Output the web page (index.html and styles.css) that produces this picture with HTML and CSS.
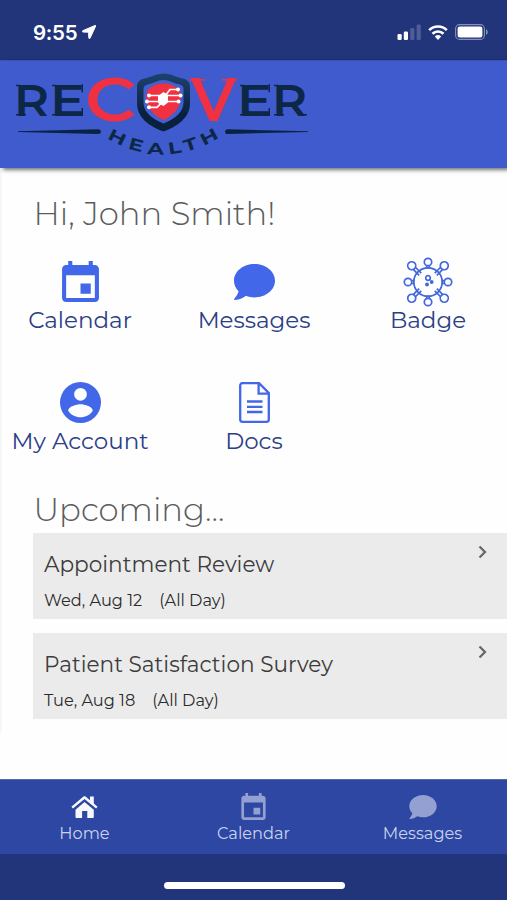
FILE: index.html
```
<!DOCTYPE html>
<html lang="en">
<head>
    <meta charset="UTF-8">
    <meta name="viewport" content="width=device-width, initial-scale=1.0">
    <title>Recover Health</title>
    <link rel="stylesheet" href="styles.css">
</head>
<body>
    <!-- Shared icons -->
    <svg class="sprite" width="0" height="0">
        <symbol id="icon-calendar" viewBox="3 1 18 20">
            <path d="M17 12h-5v5h5v-5zM16 1v2H8V1H6v2H5c-1.11 0-1.99.9-1.99 2L3 19c0 1.1.89 2 2 2h14c1.1 0 2-.9 2-2V5c0-1.1-.9-2-2-2h-1V1h-2zm3 18H5V8h14v11z"/>
        </symbol>
        <symbol id="icon-message" viewBox="0 32 512 448">
            <path d="M256 32C114.6 32 0 125.1 0 240c0 49.6 21.4 95 57 130.7C44.5 421.1 2.7 466 2.2 466.5c-2.2 2.3-2.8 5.7-1.5 8.7S4.8 480 8 480c66.3 0 116-31.8 140.6-51.4 32.7 12.3 69 19.4 107.4 19.4 141.4 0 256-93.1 256-208S397.4 32 256 32z"/>
        </symbol>
    </svg>

    <div class="status-bar">
        <div class="clock">
            <span class="time">9:55</span>
            <svg class="location" width="14" height="14" viewBox="0 0 14 14"><path d="M13.2.4.8 5.7c-.8.4-.6 1.3.2 1.3l5.6.2.2 5.7c.1.9 1 1 1.3.2L13.7 1c.2-.4-.1-.8-.5-.6z" stroke="#fff"/></svg>
        </div>
        <div class="status-icons">
            <svg width="24" height="16" viewBox="0 0 24 16">
                <rect x="0.5" y="10" width="4.2" height="6" rx="1.2"/>
                <rect x="6.8" y="7.5" width="4.2" height="8.5" rx="1.2"/>
                <rect x="13.2" y="4" width="4.2" height="12" rx="1.2" opacity=".2"/>
                <rect x="19.6" y="0.5" width="4.2" height="15.5" rx="1.2" opacity=".2"/>
            </svg>
            <svg class="wifi" width="20" height="15" viewBox="0 0 20 15">
                <path d="M1.2 5.1a12.6 12.6 0 0 1 17.6 0M4.5 8.7a8 8 0 0 1 11 0" fill="none" stroke="#fff" stroke-width="2.7"/>
                <path d="M10 15l3.2-3.5a4.7 4.7 0 0 0-6.4 0z"/>
            </svg>
            <svg class="battery" width="33" height="16" viewBox="0 0 33 16">
                <rect x=".6" y=".6" width="28.8" height="14.8" rx="4" fill="none" stroke="#fff" stroke-width="1.1" opacity=".45"/>
                <rect x="2.6" y="2.6" width="24.8" height="10.8" rx="2.2"/>
                <path d="M31 5.2c2.3.7 2.3 4.9 0 5.6z" opacity=".45"/>
            </svg>
        </div>
    </div>

    <div class="header">
        <svg class="logo" width="320" height="108" viewBox="0 60 320 108">
            <defs>
                <linearGradient id="navy" x1="0" y1="0" x2="0" y2="1">
                    <stop offset="0" stop-color="#1d4270"/>
                    <stop offset=".7" stop-color="#09213f"/>
                </linearGradient>
                <path id="health-arc" d="M107 138 Q163 172 222 136"/>
            </defs>
            <text class="logo-dark" x="14" y="115.5" textLength="35" lengthAdjust="spacingAndGlyphs">R</text>
            <text class="logo-dark" x="50" y="115.5" textLength="35" lengthAdjust="spacingAndGlyphs">E</text>
            <text class="logo-red" x="85" y="121" textLength="51" lengthAdjust="spacingAndGlyphs">C</text>
            <text class="logo-red" x="191" y="121" textLength="45" lengthAdjust="spacingAndGlyphs">V</text>
            <text class="logo-dark" x="237" y="115.5" textLength="35" lengthAdjust="spacingAndGlyphs">E</text>
            <text class="logo-dark" x="272" y="115.5" textLength="35" lengthAdjust="spacingAndGlyphs">R</text>
            <!-- Small serifs -->
            <path d="M16 84.7h4v1.6h-4zM16 114h10v1.600H16zM52 84.700h4v1.600h-4zM52 114h4v1.600h-4zM81.500 84.200h1.500v8h-1.500zM81.500 108h1.500v8h-1.500zM240 84.700h4v1.600h-4zM240 114h4v1.600h-4zM268.500 84.200h1.500v8h-1.500zM268.500 108h1.500v8h-1.500zM274 84.700h4v1.600h-4zM274 114h10v1.600h-10zM299 114h8v1.600h-8z" fill="#0d2747"/>
            <path d="M190 79h15v1.800h-15zM222 79h15v1.800h-15z" fill="#ef3142"/>

            <!-- Shield -->
            <path d="M163.500 73.500c8 0 13 4 19 5 5 1 7.500 4 7.500 8v17c0 14-12.500 23-26.500 28-14-5-26.500-14-26.500-28v-17c0-4 2.500-7 7.500-8 6-1 11-5 19-5z" fill="url(#navy)"/>
            <path d="M163.500 80c6 0 11 3.500 16 4.500 3 .7 4 2 4 5v13c0 10-9 16.500-20 21-11-4.500-20-11-20-21v-13c0-3 1-4.300 4-5 5-1 10-4.500 16-4.500z" fill="#4460cf"/>
            <path d="M163.500 83.500c6 0 10 1.500 14 5 4 3 4 13 1 18-3 6-9 11-15 13.500-6-2.500-12-7.500-15-13.500-3-5-3-15 1-18 4-3.500 8-5 14-5z" fill="#ef3142"/>
            <g fill="none" stroke="#fff" stroke-width="1.7">
                <path d="M149 95.500h11M147 101.500h14M149 107.300h8l4-4M165 96l5-6.500h8M166 95.500h14M164 101.500h14"/>
            </g>
            <path d="M163.500 92l4.500 3v7.500l-4.500 3.500-5.500-3v-7z" fill="#fff"/>
            <g fill="#fff">
                <circle cx="149" cy="95.500" r="2"/><circle cx="147" cy="101.500" r="2"/><circle cx="149" cy="107.300" r="2"/>
                <circle cx="178" cy="89.500" r="2"/><circle cx="180.500" cy="95.500" r="2"/><circle cx="178.500" cy="101.500" r="2"/>
            </g>

            <path d="M18 131.300l80-2.100c4 0 4 5 0 4.800L18 131.900z" fill="#0b2342"/>
            <path d="M308 131.300l-80-2.100c-4 0-4 5 0 4.800l80-2.100z" fill="#0b2342"/>
            <text class="logo-health"><textPath href="#health-arc" textLength="124" lengthAdjust="spacingAndGlyphs">HEALTH</textPath></text>
        </svg>
    </div>

    <div class="content">
        <h1 class="greeting">Hi, John Smith!</h1>

        <div class="menu">
            <a class="menu-item">
                <svg class="menu-icon" width="37" height="41"><use href="#icon-calendar"/></svg>
                <span>Calendar</span>
            </a>
            <a class="menu-item">
                <svg class="menu-icon" width="41" height="36"><use href="#icon-message"/></svg>
                <span>Messages</span>
            </a>
            <a class="menu-item">
                <svg class="menu-icon badge-icon" width="50" height="50" viewBox="-25 -25 50 50">
                    <circle r="14.2"/>
                    <circle cy="-20" r="3.7"/><path d="M-1.3-16.500v3M1.300-16.500v3"/>
                    <circle cy="20" r="3.7"/><path d="M-1.3 16.500v-3M1.300 16.500v-3"/>
                    <circle cx="-20" r="3.7"/><path d="M-16.500-1.300h3M-16.500 1.300h3"/>
                    <circle cx="20" r="3.7"/><path d="M16.500-1.300h-3M16.500 1.300h-3"/>
                    <g transform="rotate(45)">
                        <circle cy="-23" r="4"/><path d="M-1.500-19v8M1.500-19v8"/>
                        <circle cy="23" r="4"/><path d="M-1.500 19v-8M1.500 19v-8"/>
                        <circle cx="-23" r="4"/><path d="M-19-1.500h8M-19 1.500h8"/>
                        <circle cx="23" r="4"/><path d="M19-1.500h-8M19 1.500h-8"/>
                    </g>
                    <circle cx="0" cy="-4" r="2.3"/>
                    <circle class="dot" cx="3.7" cy="0" r="1.9"/>
                    <circle class="dot" cx="-1" cy="2.5" r="1.9"/>
                </svg>
                <span>Badge</span>
            </a>
            <a class="menu-item">
                <svg class="menu-icon" width="41" height="41" viewBox="2 2 20 20"><path fill-rule="evenodd" d="M12 2a10 10 0 1 0 0 20 10 10 0 0 0 0-20zm0 2.9a3.1 3.1 0 1 1 0 6.2 3.1 3.1 0 0 1 0-6.2zm0 14.300c-2.500 0-4.700-1.200-6-3.200 0-2 4-3.100 6-3.100s6 1.100 6 3.100c-1.300 2-3.500 3.200-6 3.200z"/></svg>
                <span>My Account</span>
            </a>
            <a class="menu-item">
                <svg class="menu-icon docs-icon" width="31" height="41" viewBox="0 0 31 41">
                    <path d="M3.5 1.1H20L29.800 11v26.500c0 1.300-1 2.300-2.300 2.300h-24c-1.300 0-2.300-1-2.300-2.300v-34c0-1.300 1-2.400 2.300-2.400zM19.600 1.500V11.600H29.500"/>
                    <path d="M8 19.500h15.500M8 24.800h15.500M8 30h15.500"/>
                </svg>
                <span>Docs</span>
            </a>
        </div>

        <h1 class="upcoming">Upcoming...</h1>

        <div class="event">
            <div class="event-title">Appointment Review</div>
            <div class="event-date"><span>Wed, Aug 12</span><span>(All Day)</span></div>
            <svg class="chevron" width="9" height="14" viewBox="0 0 9 14"><path d="M1.500 1.500L7 7l-5.500 5.500"/></svg>
        </div>
        <div class="event">
            <div class="event-title">Patient Satisfaction Survey</div>
            <div class="event-date"><span>Tue, Aug 18</span><span>(All Day)</span></div>
            <svg class="chevron" width="9" height="14" viewBox="0 0 9 14"><path d="M1.500 1.500L7 7l-5.500 5.500"/></svg>
        </div>
    </div>

    <div class="tab-bar">
        <a class="tab active">
            <svg width="27" height="22" viewBox="0 0 27 22">
                <path d="M13.500 6l9.300 7.800V21c0 .5-.4.900-.9.900h-5.600v-6.800h-5.200v6.800H5.400c-.5 0-.9-.4-.9-.9v-7.200z"/>
                <path d="M.4 10.700L12.200.8c.8-.6 1.800-.6 2.600 0L19 4.300V.4h3.800v7.100l3.800 3.200-1.500 1.900L13.500 3 1.900 12.600z"/>
            </svg>
            <span>Home</span>
        </a>
        <a class="tab">
            <svg width="25" height="27"><use href="#icon-calendar"/></svg>
            <span>Calendar</span>
        </a>
        <a class="tab">
            <svg width="28" height="24"><use href="#icon-message"/></svg>
            <span>Messages</span>
        </a>
    </div>
    <div class="home-area">
        <div class="home-indicator"></div>
    </div>
</body>
</html>
```
FILE: styles.css
```
* {
    box-sizing: border-box;
    margin: 0;
    padding: 0;
}

body {
    font-family: "Montserrat", "Inter", sans-serif;
    display: flex;
    flex-direction: column;
    height: 900px;
    background-color: #fefefe;
    overflow: hidden;
}

.sprite {
    display: none;
}

/* Phone status bar */
.status-bar {
    height: 60px;
    background-color: #22357a;
    color: #fff;
    fill: #fff;
    display: flex;
    justify-content: space-between;
    padding: 24px 19px 0 33px;
}

.clock {
    display: flex;
    height: 16px;
    align-items: center;
    gap: 5px;
}

.time {
    font-family: "Inter", sans-serif;
    font-size: 20.5px;
    font-weight: 600;
    letter-spacing: -0.3px;
}

.status-icons {
    display: flex;
    align-items: center;
    height: 16px;
    gap: 7px;
}

/* Header with logo */
.header {
    height: 108px;
    background-color: #3f5bce;
    border-top: 1px solid #3a51b5;
    box-shadow: 3px 2px 4px rgba(0, 0, 0, 0.55);
    z-index: 1;
}

.logo {
    display: block;
    margin-top: -1px;
}

.logo-dark {
    font-size: 44px;
    font-weight: 600;
    fill: #0d2747;
}

.logo-red {
    font-size: 60px;
    font-weight: 600;
    fill: #ef3142;
}

.logo-health {
    font-size: 16.5px;
    font-weight: 700;
    letter-spacing: 4px;
    fill: #0d2747;
}

/* Main content */
.content {
    height: 611px;
    padding-top: 24.5px;
    background: linear-gradient(#f3f5f8, #f3f5f8) 0 0 / 1.5px 565px no-repeat;
}

.greeting,
.upcoming {
    padding-left: 33.5px;
    font-size: 32.3px;
    font-weight: 300;
    line-height: 41px;
    color: #5c5c5c;
}

.menu {
    display: grid;
    grid-template-columns: repeat(3, 174px);
    row-gap: 46px;
    margin: 25.5px 0 34px -7px;
}

.menu-item {
    height: 75px;
    display: flex;
    flex-direction: column;
    align-items: center;
    font-size: 23px;
    line-height: 28px;
    color: #2c3f87;
    white-space: nowrap;
}

.menu-item span {
    margin-top: 2px;
}

.menu-icon {
    fill: #4267e8;
    margin: auto 0;
    flex-shrink: 0;
}

.badge-icon {
    margin: -2px 0 -3px;
    fill: none;
    stroke: #4267dc;
    stroke-width: 1.7;
}

.badge-icon .dot {
    fill: #4267dc;
    stroke: none;
}

.docs-icon {
    fill: none;
    stroke: #4267e8;
    stroke-width: 2.3;
}

/* Upcoming events */
.upcoming {
    margin-bottom: 2.5px;
}

.event {
    position: relative;
    height: 86px;
    margin: 0 0 14px 33px;
    padding: 16px 11px;
    background-color: #ebebeb;
    color: #3c3c3c;
}

.event-title {
    font-size: 21.6px;
    line-height: 30px;
}

.event-date {
    display: flex;
    gap: 17px;
    margin-top: 11px;
    font-size: 16.2px;
    line-height: 20px;
    color: #2b2b2b;
}

.chevron {
    position: absolute;
    top: 12px;
    right: 20px;
    fill: none;
    stroke: #666;
    stroke-width: 2.2;
}

/* Bottom tabs */
.tab-bar {
    height: 75px;
    display: grid;
    grid-template-columns: repeat(3, 1fr);
    background-color: #2d47a2;
    border-top: 1px solid #5267b2;
}

.tab {
    display: flex;
    flex-direction: column;
    align-items: center;
    padding-top: 10px;
    font-size: 16.2px;
    line-height: 20px;
    color: #cad3f0;
    fill: #93a0d1;
}

.tab svg {
    margin: auto 0;
}

.tab span {
    margin-bottom: 11px;
}

.tab.active {
    fill: #f7f8fb;
}

.home-area {
    height: 46px;
    padding: 28px 0 0 1px;
    background-color: #22357a;
}

.home-indicator {
    width: 181px;
    height: 7px;
    margin: 0 auto;
    border-radius: 4px;
    background-color: #fff;
}
```
